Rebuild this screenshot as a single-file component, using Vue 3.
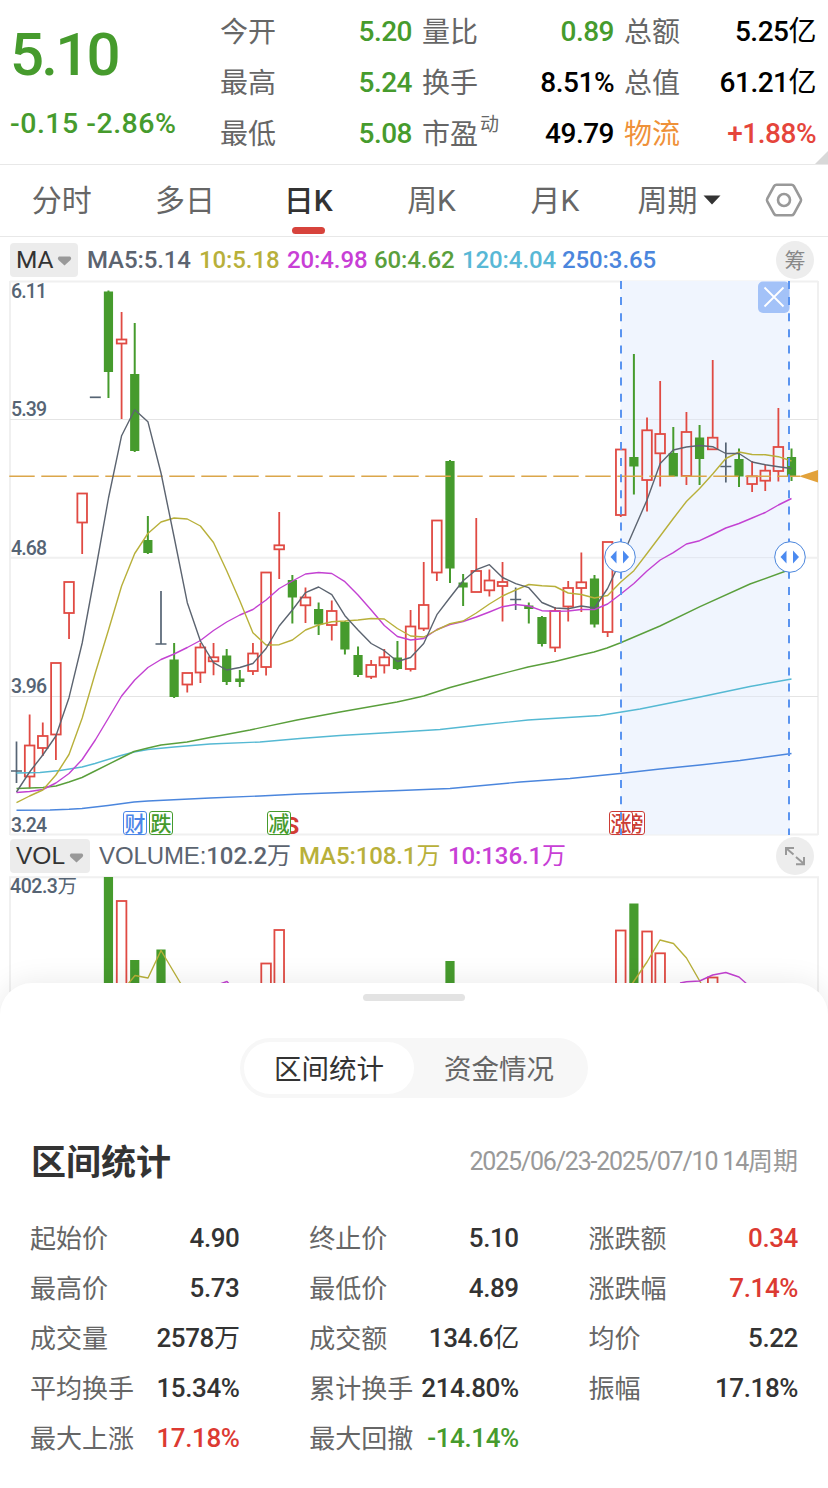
<script setup>
import { ref } from "vue";

const quotes = [
  { label: "今开", value: "5.20", tone: "down" },
  { label: "量比", value: "0.89", tone: "down" },
  { label: "总额", value: "5.25", unit: "亿" },
  { label: "最高", value: "5.24", tone: "down" },
  { label: "换手", value: "8.51%" },
  { label: "总值", value: "61.21", unit: "亿" },
  { label: "最低", value: "5.08", tone: "down" },
  { label: "市盈", sup: "动", value: "49.79" },
  { label: "物流", value: "+1.88%", tone: "up", sector: true },
];

const periods = ["分时", "多日", "日K", "周K", "月K"];
const activePeriod = ref("日K");

const maLegend = [
  { text: "MA5:5.14", key: "ma5" },
  { text: "10:5.18", key: "ma10" },
  { text: "20:4.98", key: "ma20" },
  { text: "60:4.62", key: "ma60" },
  { text: "120:4.04", key: "ma120" },
  { text: "250:3.65", key: "ma250" },
];

const STEP = 13.136;
const xAt = (i) => 16.5 + i * STEP;

// [kind, high, body top, body bottom, low]; u = up, d = down, f = flat
const candles = [
  ["f", 741.5, 771, 771, 783],
  ["u", 714.5, 745.5, 776.5, 788.5],
  ["u", 722.5, 736, 748, 756],
  ["u", 663, 663, 734.5, 760],
  ["u", 582, 582, 613, 639],
  ["u", 493.5, 493.5, 522.5, 554],
  ["f", 397.3, 397.3, 397.3, 397.3],
  ["d", 290.5, 291.5, 372, 398],
  ["u", 312, 339.5, 343.5, 419],
  ["d", 323, 374, 451, 452],
  ["d", 516, 540, 553, 554],
  ["f", 591, 644, 644, 644],
  ["d", 643, 659.5, 697, 698],
  ["u", 673, 673, 684.5, 692.5],
  ["u", 643, 647.5, 672.5, 683],
  ["u", 643, 657.3, 661.3, 675.3],
  ["d", 649, 655.5, 682, 685],
  ["d", 670, 678.5, 682, 687],
  ["u", 643, 653.5, 671, 675],
  ["u", 572.5, 572.5, 667, 675.5],
  ["u", 512, 545.3, 549.3, 579],
  ["d", 575, 580, 597.5, 623.5],
  ["u", 587.5, 597.5, 605.3, 623],
  ["d", 602.5, 609, 624.5, 635],
  ["u", 600.5, 611, 625, 640.5],
  ["d", 621, 622, 649.5, 654.5],
  ["d", 646.5, 655, 675, 677],
  ["u", 660, 665, 676.7, 679],
  ["u", 649, 657.3, 665.3, 673.5],
  ["d", 641, 657.5, 669, 670],
  ["u", 610, 626.5, 669, 671.5],
  ["u", 562, 605, 628.5, 631],
  ["u", 520.5, 520.5, 572.5, 581],
  ["d", 460, 461, 568.5, 583],
  ["d", 574, 582.5, 587.5, 606],
  ["u", 518, 571, 592, 592],
  ["u", 569.5, 580.5, 590.3, 596.5],
  ["u", 562, 582, 586, 621.5],
  ["f", 587.5, 599.5, 599.5, 610],
  ["d", 602.5, 605.5, 609, 623.5],
  ["d", 616, 617, 644, 646.5],
  ["u", 607, 611, 647.5, 652],
  ["u", 581, 588, 606.5, 621.5],
  ["u", 552.5, 582.3, 588, 612],
  ["d", 575, 578.5, 624.5, 627.5],
  ["u", 542, 542, 632, 637],
  ["u", 449.5, 449.5, 515, 517],
  ["d", 354, 457, 466.5, 494.5],
  ["u", 417.5, 430.3, 480, 511.5],
  ["u", 381, 434, 453.3, 486.5],
  ["d", 427, 453, 476.5, 476.5],
  ["u", 412, 432, 476, 485],
  ["d", 425, 437.5, 459, 485],
  ["u", 360, 437.7, 449.3, 449.3],
  ["f", 442.5, 466.5, 466.5, 482.5],
  ["d", 448.5, 459, 476.5, 487],
  ["u", 461, 476.3, 484, 492],
  ["u", 464.5, 470.7, 480.7, 491],
  ["u", 408, 447, 471, 481.5],
  ["d", 448.5, 457, 476, 481],
];

const perBar = (ys) => ys.map((y, i) => `${xAt(i).toFixed(1)},${y}`).join(" ");

const lines = {
  ma250:
    "16.5,810.3 50,810 69,809.3 82,808.5 108,805.5 134,802 148,801 210,798 260,796 300,794 400,790.5 450,788.5 520,782 570,778.5 620,773.5 660,769 700,765 740,760.5 791.5,753.5",
  ma120:
    "16.5,773 40,772.5 60,770.5 82,767 95,763.5 121,755.5 134,752 148,749.5 174,747 210,744 260,742 300,738.5 340,735.5 400,732 440,729.5 480,725 528,720 600,715.5 640,709 700,697 750,686.5 791.5,679",
  ma60: "16.5,788.5 43,787.5 56,786 69,782 82,777.5 95,771 121,758 134,751.5 148,748 161,745 187,742 210,737.5 250,730 297,720 340,712 397,702 410.6,699 423.7,696 450,687.5 489,677 528,667 555,661.5 581,655 594,652 607,648 620,643 660,626 700,606.7 750,584 791.5,569",
  ma20: perBar([
    792.5, 791.5, 789.5, 783, 773.5, 759.5, 740, 718, 696, 680, 667.5, 659.5,
    654, 647.5, 640.5, 630.5, 622, 615, 609.5, 600, 588.5, 581, 574, 572.5,
    573.5, 581.7, 595, 610, 625.5, 636.5, 640, 638.5, 629.5, 624.5, 621.5, 617,
    612, 606.7, 604.5, 606, 610.7, 611.3, 611, 609.5, 609.5, 604, 594, 583.5,
    571, 560, 552.7, 544, 540.7, 534.5, 528, 523.5, 518, 512.5, 505, 498.5,
  ]),
  ma10: perBar([
    802.7, 796, 790, 775, 754.5, 718, 673, 630, 586, 553.5, 533.5, 522, 518,
    519, 526, 542.5, 570.7, 600.7, 632.7, 645, 644.7, 640, 630, 625, 621.7, 621,
    620, 618.5, 619, 628.5, 636, 637, 630, 623.7, 621, 613, 604, 596, 590,
    584.5, 585.7, 586.5, 593, 594.5, 598, 595.5, 582, 570.7, 553.5, 536, 518.5,
    501.5, 488.5, 474, 458.5, 452, 454.5, 454.7, 456.7, 461,
  ]),
  ma5: perBar([
    792, 772, 755, 736, 697.7, 643, 572, 498, 435.7, 409.7, 421.7, 473, 537,
    602.7, 641, 662.7, 670, 667.5, 663.5, 648.5, 626, 610, 592.7, 587, 594.7,
    615.7, 630, 643.5, 650.7, 661.5, 657.5, 643.5, 614.7, 597.5, 580.7, 569.7,
    564.7, 577.5, 583.7, 587.7, 602.5, 608, 608.7, 606, 608, 588.5, 560, 530,
    500, 463.5, 450, 447, 445.5, 446.7, 453.5, 453.5, 462, 464.7, 466.7, 468.5,
  ]),
};

const priceTicks = [
  { label: "6.11", y: 297.5 },
  { label: "5.39", y: 416 },
  { label: "4.68", y: 554.5 },
  { label: "3.96", y: 693 },
  { label: "3.24", y: 831.5 },
];

// [bar index, kind, top]
const volumes = [
  [7, "d", 877],
  [8, "u", 901],
  [9, "d", 960],
  [11, "d", 949.5],
  [19, "u", 963.5],
  [20, "u", 930],
  [33, "d", 961],
  [46, "u", 930.5],
  [47, "d", 903.5],
  [48, "u", 931.5],
  [49, "u", 953.3],
  [53, "u", 977.5],
];

const marks = [
  { text: "财", x: 123.5, tone: "blue" },
  { text: "跌", x: 149.5, tone: "green" },
  { text: "减", x: 267.5, tone: "green" },
  { text: "榜", x: 621.5, tone: "red" },
  { text: "涨", x: 609.5, tone: "red" },
];

const sheetTabs = ["区间统计", "资金情况"];
const activeSheet = ref("区间统计");

const stats = [
  { label: "起始价", value: "4.90" },
  { label: "终止价", value: "5.10" },
  { label: "涨跌额", value: "0.34", tone: "up" },
  { label: "最高价", value: "5.73" },
  { label: "最低价", value: "4.89" },
  { label: "涨跌幅", value: "7.14%", tone: "up" },
  { label: "成交量", value: "2578", unit: "万" },
  { label: "成交额", value: "134.6", unit: "亿" },
  { label: "均价", value: "5.22" },
  { label: "平均换手", value: "15.34%" },
  { label: "累计换手", value: "214.80%" },
  { label: "振幅", value: "17.18%" },
  { label: "最大上涨", value: "17.18%", tone: "up" },
  { label: "最大回撤", value: "-14.14%", tone: "down" },
];
</script>

<template>
  <div class="page">
    <header class="quote">
      <div class="quote__main">
        <div class="quote__price">5.10</div>
        <div class="quote__change">-0.15 -2.86%</div>
      </div>
      <div class="quote__grid">
        <div v-for="q in quotes" :key="q.label" class="quote__item">
          <span class="quote__label" :class="{ sector: q.sector }"
            >{{ q.label }}<span v-if="q.sup" class="quote__sup">{{ q.sup }}</span></span
          >
          <span class="quote__value" :class="q.tone"
            >{{ q.value }}<span v-if="q.unit" class="unit">{{ q.unit }}</span></span
          >
        </div>
      </div>
      <i class="quote__corner"></i>
    </header>

    <nav class="periods">
      <button
        v-for="p in periods"
        :key="p"
        class="periods__tab"
        :class="{ active: p === activePeriod }"
        @click="activePeriod = p"
      >
        {{ p }}
      </button>
      <button class="periods__more">
        周期
        <svg width="18" height="10" viewBox="0 0 18 10">
          <path d="M0.5 0.5H17.5L9 9.5Z" fill="#333" />
        </svg>
      </button>
      <svg class="periods__gear" width="38" height="36" viewBox="0 0 38 36">
        <path
          d="M11.5 2.7H26.5Q28 2.7 28.8 4L35.7 16.6Q36.4 18 35.7 19.4L28.8 32Q28 33.3 26.5 33.3H11.5Q10 33.3 9.2 32L2.3 19.4Q1.6 18 2.3 16.6L9.2 4Q10 2.7 11.5 2.7Z"
        />
        <circle cx="19" cy="18" r="6" />
      </svg>
    </nav>

    <div class="legend">
      <button class="picker picker--ma">
        MA
        <svg width="15" height="10" viewBox="0 0 15 10">
          <path d="M2 .5H13Q15 2 13.5 4L7.5 9.5L1.5 4Q0 2 2 .5Z" />
        </svg>
      </button>
      <div class="legend__values">
        <span v-for="m in maLegend" :key="m.key" :class="['t-' + m.key]">{{ m.text }}</span>
      </div>
      <button class="round">筹</button>
    </div>

    <svg class="chart" width="828" height="556" viewBox="0 280 828 556">
      <g class="frame">
        <path d="M10 281.5H818M10 557.7H818M10 834.5H818" />
        <path d="M10 281V835M818 281V835" />
        <path class="thin" d="M10 419.5H818M10 696.5H818" />
      </g>
      <rect x="620.5" y="281" width="169.5" height="553.5" fill="#f0f5fe" />
      <path class="grid-on-range" d="M620.5 419.5H790M620.5 557.7H790M620.5 696.5H790" />

      <text v-for="t in priceTicks" :key="t.label" class="tick" x="11" :y="t.y" textLength="36">
        {{ t.label }}
      </text>

      <g v-for="(c, i) in candles" :key="i" :class="'c-' + c[0]">
        <template v-if="c[0] === 'u'">
          <path :d="`M${xAt(i)} ${c[1]}V${c[2]}M${xAt(i)} ${c[3]}V${c[4]}`" />
          <rect :x="xAt(i) - 4.8" :y="c[2]" width="9.6" :height="c[3] - c[2]" />
        </template>
        <template v-else-if="c[0] === 'd'">
          <path :d="`M${xAt(i)} ${c[1]}V${c[4]}`" />
          <rect :x="xAt(i) - 4.6" :y="c[2]" width="9.2" :height="c[3] - c[2]" />
        </template>
        <path
          v-else
          :d="`M${xAt(i)} ${c[1]}V${c[4]}M${xAt(i) - 5.5} ${c[2]}H${xAt(i) + 5.5}`"
        />
      </g>

      <path class="last-price" d="M9.3 476.3H800" />
      <path d="M799 476.3L818 470V482.5Z" fill="#e2a23b" />

      <polyline v-for="(pts, k) in lines" :key="k" :class="['line', k]" :points="pts" />

      <text class="mark-s" x="284.5" y="833.5">S</text>
      <g v-for="m in marks" :key="m.text" :class="['mark', m.tone]">
        <rect :x="m.x" y="811.5" width="23" height="23" rx="2.5" />
        <text :x="m.x + 11.5" y="831">{{ m.text }}</text>
      </g>

      <path class="range-edge" d="M621 281V835M789 281V835" />
      <g v-for="x in [620, 790]" :key="x" class="handle">
        <circle :cx="x" cy="557" r="15.3" />
        <path :d="`M${x - 3.5} 550.5V563.5L${x - 9.5} 557Z`" />
        <path :d="`M${x + 3} 550.5V563.5L${x + 9} 557Z`" />
      </g>
      <rect x="758" y="281.5" width="31.5" height="31.5" rx="5" fill="#a3c2f8" />
      <path d="M764.5 287.5L783.5 306.5M783.5 287.5L764.5 306.5" stroke="#fff" stroke-width="1.8" />
      <path class="range-edge" d="M789 281V313" />
    </svg>

    <div class="legend legend--vol">
      <button class="picker picker--vol">
        VOL
        <svg width="15" height="10" viewBox="0 0 15 10">
          <path d="M2 .5H13Q15 2 13.5 4L7.5 9.5L1.5 4Q0 2 2 .5Z" />
        </svg>
      </button>
      <div class="legend__values legend__values--vol">
        <span class="t-ma5"><b>VOLUME:</b>102.2<span class="unit">万</span></span>
        <span class="t-ma10">MA5:108.1<span class="unit">万</span></span>
        <span class="t-ma20">10:136.1<span class="unit">万</span></span>
      </div>
      <button class="round">
        <svg width="22" height="20" viewBox="0 0 22 20">
          <path d="M2 9V2H10M2.5 2.5L9.5 8.5M12 11L19 17M20 11V18.2H12" />
        </svg>
      </button>
    </div>

    <svg class="chart" width="828" height="124" viewBox="0 876 828 124">
      <path class="frame" d="M10 1000V877.3H818V1000" fill="none" />
      <text class="tick" x="10" y="893" textLength="67">402.3<tspan class="unit">万</tspan></text>
      <g v-for="v in volumes" :key="v[0]" :class="'c-' + v[1]">
        <rect
          :x="xAt(v[0]) - (v[1] === 'u' ? 4.8 : 4.6)"
          :y="v[2]"
          :width="v[1] === 'u' ? 9.6 : 9.2"
          height="130"
        />
      </g>
      <polyline class="line ma10" points="128,984 135,975.5 148,978 161,950.5 181,984" />
      <polyline class="line ma10" points="632,984 647,962 660,940 673.5,943.5 686.5,958 702,985" />
      <polyline class="line ma20" points="220,984 227,981.5 230,985" />
      <polyline class="line ma20" points="680,983 686.5,981.7 699.6,981 712.7,975 725.8,972.5 739,977 748,985" />
    </svg>

    <section class="sheet">
      <div class="sheet__grip"></div>
      <div class="switch">
        <button
          v-for="t in sheetTabs"
          :key="t"
          class="switch__item"
          :class="{ active: t === activeSheet }"
          @click="activeSheet = t"
        >
          {{ t }}
        </button>
      </div>
      <div class="sheet__head">
        <h2>区间统计</h2>
        <span class="sheet__dates"><span class="digits">2025/06/23-2025/07/10 14</span>周期</span>
      </div>
      <div class="stats">
        <div v-for="s in stats" :key="s.label" class="stats__item">
          <span class="stats__label">{{ s.label }}</span>
          <span class="stats__value" :class="s.tone"
            >{{ s.value }}<span v-if="s.unit" class="unit">{{ s.unit }}</span></span
          >
        </div>
      </div>
    </section>
  </div>
</template>

<style>
body {
  margin: 0;
  background: #fff;
}
</style>

<style scoped>
.page {
  width: 828px;
  height: 1488px;
  overflow: hidden;
  background: #fff;
  color: #333;
  font-family: Roboto, "Noto Sans CJK SC", sans-serif;
}

button {
  border: 0;
  padding: 0;
  background: none;
  font: inherit;
  color: inherit;
}

.up {
  color: #dc3a32;
}

.down {
  color: #469b2d;
}

.unit {
  font-weight: 400;
}

/* quote header */
.quote {
  position: relative;
  box-sizing: border-box;
  height: 165px;
  display: flex;
  padding: 6px 12px 0 10px;
  border-bottom: 1px solid #e8e8e8;
}

.quote__main {
  width: 211px;
  color: #469b2d;
  font-weight: 500;
  white-space: nowrap;
}

.quote__price {
  height: 95px;
  line-height: 98px;
  font-size: 60px;
  letter-spacing: -2.8px;
}

.quote__change {
  line-height: 46px;
  font-size: 28.5px;
  letter-spacing: 0.5px;
}

.quote__grid {
  display: grid;
  grid-template-columns: repeat(3, 192px);
  grid-auto-rows: 51px;
  column-gap: 10px;
}

.quote__item {
  display: flex;
  justify-content: space-between;
  line-height: 51px;
  font-size: 28px;
  white-space: nowrap;
}

.quote__label {
  padding-top: 1px;
  color: #666;
}

.quote__label.sector {
  color: #ef9139;
}

.quote__sup {
  position: relative;
  top: -13px;
  left: 2px;
  font-size: 19px;
  line-height: 1;
}

.quote__value {
  color: #000;
  font-weight: 500;
  letter-spacing: -0.5px;
}

.quote__value.up {
  color: #e5453b;
}

.quote__value.down {
  color: #469b2d;
}

.quote__corner {
  position: absolute;
  right: 0;
  bottom: 0;
  border-left: 13px solid transparent;
  border-bottom: 13px solid #d8d8d8;
}

/* period tabs */
.periods {
  box-sizing: border-box;
  height: 72px;
  display: flex;
  align-items: center;
  border-bottom: 1px solid #e8e8e8;
  font-size: 30px;
  color: #666;
}

.periods__tab {
  position: relative;
  width: 123.3px;
  height: 71px;
  padding-bottom: 6px;
}

.periods__tab.active {
  color: #333;
  font-weight: 500;
}

.periods__tab.active::after {
  content: "";
  position: absolute;
  left: 45px;
  bottom: 2px;
  width: 33px;
  height: 7px;
  border-radius: 3.5px;
  background: #d7433c;
}

.periods__more {
  display: flex;
  align-items: center;
  gap: 6px;
  margin-left: 21px;
  padding-bottom: 6px;
}

.periods__more svg {
  margin-top: 5px;
}

.periods__gear {
  margin-left: 44px;
  margin-top: -1px;
  fill: none;
  stroke: #999;
  stroke-width: 2.6;
}

/* indicator rows */
.legend {
  height: 43px;
  display: flex;
  align-items: center;
  padding: 0 14px 0 10px;
}

.legend--vol {
  height: 40px;
}

.picker {
  box-sizing: border-box;
  height: 34px;
  display: flex;
  align-items: center;
  justify-content: space-between;
  padding: 0 6px 2px;
  border-radius: 4px;
  background: #ececec;
  color: #333;
  font-size: 24.5px;
}

.picker svg {
  fill: #999;
  margin-top: 4px;
}

.picker--ma {
  width: 68px;
  margin-top: 3px;
}

.picker--vol {
  width: 80px;
  padding-bottom: 0;
  font-family: "Liberation Sans", sans-serif;
}

.legend__values {
  flex: 1;
  display: grid;
  grid-template-columns: 112px 88px 87px 88px 100px 100px;
  padding: 3px 0 0 9px;
  line-height: 34px;
  font-size: 24px;
  font-weight: 500;
  letter-spacing: -0.1px;
  white-space: nowrap;
}

.legend__values--vol {
  grid-template-columns: 200px 149px 130px;
  padding-top: 0;
}

.legend__values b {
  font-family: "Liberation Sans", sans-serif;
  font-weight: 400;
}

.t-ma5 {
  color: #5c6470;
}

.t-ma10 {
  color: #b8b03a;
}

.t-ma20 {
  color: #c83fd6;
}

.t-ma60 {
  color: #5a9f3c;
}

.t-ma120 {
  color: #58b8d6;
}

.t-ma250 {
  color: #4b86dd;
}

.round {
  width: 38px;
  height: 38px;
  margin-top: 3px;
  padding-bottom: 2px;
  box-sizing: border-box;
  display: flex;
  align-items: center;
  justify-content: center;
  border-radius: 50%;
  background: #ededed;
  color: #888;
  font-size: 21px;
}

.legend--vol .round {
  margin-top: 0;
  padding-bottom: 0;
}

.round svg {
  fill: none;
  stroke: #999;
  stroke-width: 2;
}

/* charts */
.chart {
  display: block;
}

.frame {
  stroke: #f0f0f0;
  stroke-width: 2;
}

.frame .thin {
  stroke: #e4e4e4;
  stroke-width: 1;
}

.grid-on-range {
  stroke: #e2e6ee;
  stroke-width: 1;
}

.tick {
  fill: #566474;
  font-size: 19.5px;
  font-weight: 500;
}

.c-u path,
.c-u rect {
  fill: none;
  stroke: #e04a43;
  stroke-width: 1.8;
}

.c-d path {
  stroke: #469b2d;
  stroke-width: 2;
}

.c-d rect {
  fill: #469b2d;
}

.c-f path {
  stroke: #566474;
  stroke-width: 1.7;
}

.line {
  fill: none;
  stroke-width: 1.4;
  stroke-linejoin: round;
}

.line.ma5 {
  stroke: #5c6470;
}

.line.ma10 {
  stroke: #b8b03a;
}

.line.ma20 {
  stroke: #c342d2;
}

.line.ma60 {
  stroke: #5a9f3c;
}

.line.ma120 {
  stroke: #55b9d3;
}

.line.ma250 {
  stroke: #4b86dd;
}

.last-price {
  stroke: #dba64a;
  stroke-width: 1.5;
  stroke-dasharray: 25.4 6.6;
}

.range-edge {
  fill: none;
  stroke: #5a94f0;
  stroke-width: 2;
  stroke-dasharray: 8 8.1;
}

.handle circle {
  fill: #fff;
  stroke: #4b86dd;
  stroke-width: 1;
}

.handle path {
  fill: #4b8af0;
}

.mark rect {
  fill: #fff;
  stroke: currentColor;
  stroke-width: 1;
}

.mark text {
  fill: currentColor;
  font-size: 21px;
  font-weight: 500;
  text-anchor: middle;
}

.mark.blue {
  color: #4b86e8;
}

.mark.green {
  color: #469b2d;
}

.mark.red {
  color: #cc3d36;
}

.mark-s {
  fill: #d23c34;
  font-size: 24px;
  font-weight: 700;
}

/* bottom sheet */
.sheet {
  position: relative;
  box-sizing: border-box;
  height: 505px;
  margin-top: -17px;
  padding: 11px 30px 0;
  border-radius: 32px 32px 0 0;
  background: #fff;
  box-shadow: 0 0 30px rgba(0, 0, 0, 0.09);
}

.sheet__grip {
  width: 102px;
  height: 7px;
  margin: 0 auto;
  border-radius: 4px;
  background: #e3e3e3;
}

.switch {
  box-sizing: border-box;
  width: 348px;
  height: 60px;
  margin: 37px auto 0;
  padding: 4px;
  display: flex;
  border-radius: 30px;
  background: #f7f7f7;
  font-size: 27.5px;
  color: #666;
}

.switch__item {
  width: 170px;
  padding-bottom: 3px;
  border-radius: 26px;
}

.switch__item.active {
  background: #fff;
  color: #333;
}

.sheet__head {
  height: 56px;
  margin-top: 33px;
  display: flex;
  align-items: center;
  justify-content: space-between;
}

.sheet__head h2 {
  margin: 0 0 0 1px;
  font-size: 35px;
  font-weight: 700;
  color: #333;
}

.sheet__dates {
  padding-bottom: 1px;
  color: #999;
  font-size: 25px;
}

.sheet__dates .digits {
  letter-spacing: -1.2px;
}

.stats {
  display: grid;
  grid-template-columns: repeat(3, 209.5px);
  grid-auto-rows: 50px;
  justify-content: space-between;
  margin-top: 26px;
}

.stats__item {
  display: flex;
  justify-content: space-between;
  line-height: 50px;
  white-space: nowrap;
}

.stats__label {
  padding-top: 1px;
  color: #666;
  font-size: 26px;
}

.stats__value {
  font-size: 26px;
  font-weight: 500;
  letter-spacing: -0.4px;
}
</style>
